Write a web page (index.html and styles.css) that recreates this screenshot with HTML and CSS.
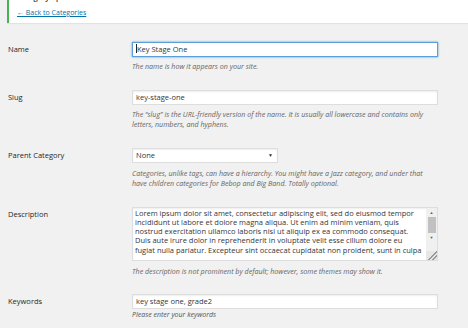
FILE: index.html
```html
<!DOCTYPE html>
<html lang="en">

<head>
    <meta charset="UTF-8">
    <title>Edit Category</title>
    <link rel="stylesheet" href="styles.css">
</head>

<body>
    <div class="notice">
        <p class="notice-title">Category updated.</p>
        <p class="notice-link"><a href="#">&larr; Back to Categories</a></p>
    </div>

    <div class="form-table">
        <div class="row row-name">
            <div class="row-label">Name</div>
            <div class="row-field">
                <div class="input focused"><span class="caret"></span>Key Stage One</div>
                <p class="description">The name is how it appears on your site.</p>
            </div>
        </div>

        <div class="row row-slug">
            <div class="row-label">Slug</div>
            <div class="row-field">
                <div class="input">key-stage-one</div>
                <p class="description">The &ldquo;slug&rdquo; is the URL-friendly version of the name. It is usually all lowercase and contains only<br>letters, numbers, and hyphens.</p>
            </div>
        </div>

        <div class="row row-parent">
            <div class="row-label">Parent Category</div>
            <div class="row-field">
                <div class="select">None<span class="select-arrow">&#9660;</span></div>
                <p class="description">Categories, unlike tags, can have a hierarchy. You might have a Jazz category, and under that<br>have children categories for Bebop and Big Band. Totally optional.</p>
            </div>
        </div>

        <div class="row row-desc">
            <div class="row-label">Description</div>
            <div class="row-field">
                <div class="textarea">
                    <div class="textarea-text">Lorem ipsum dolor sit amet, consectetur adipiscing elit, sed do eiusmod tempor<br>incididunt ut labore et dolore magna aliqua. Ut enim ad minim veniam, quis<br>nostrud exercitation ullamco laboris nisi ut aliquip ex ea commodo consequat.<br>Duis aute irure dolor in reprehenderit in voluptate velit esse cillum dolore eu<br>fugiat nulla pariatur. Excepteur sint occaecat cupidatat non proident, sunt in culpa</div>
                    <div class="scrollbar">
                        <span class="scroll-up">&#9650;</span>
                        <span class="scroll-thumb"></span>
                        <span class="scroll-down">&#9660;</span>
                        <span class="grip"></span>
                    </div>
                </div>
                <p class="description">The description is not prominent by default; however, some themes may show it.</p>
            </div>
        </div>

        <div class="row row-keywords">
            <div class="row-label">Keywords</div>
            <div class="row-field">
                <div class="input">key stage one, grade2</div>
                <p class="hint">Please enter your keywords</p>
            </div>
        </div>
    </div>
</body>

</html>
```

FILE: styles.css
```css
body {
    margin: 0;
    background: #f1f1f1;
    font-family: 'Open Sans', 'Noto Sans', sans-serif;
    color: #23282d;
    overflow: hidden;
}

p {
    margin: 0;
}

.notice {
    margin-left: 7px;
    height: 23px;
    background: #fff;
    border-left: 2px solid #46b450;
    box-shadow: 0 1px 1px rgba(0, 0, 0, 0.06);
    padding-left: 8px;
    overflow: hidden;
}

.notice-title {
    font-size: 7.5px;
    line-height: 10px;
    margin-top: -8px;
    font-weight: 600;
}

.notice-link {
    font-size: 7px;
    line-height: 10px;
    margin-top: 6px;
}

.notice-link a {
    color: #0073aa;
}

.form-table {
    padding-left: 8px;
    margin-top: 19px;
}

.row {
    display: flex;
    align-items: flex-start;
    margin-bottom: 18px;
}

.row-label {
    width: 124px;
    flex: none;
    padding-top: 2px;
    font-size: 7.5px;
    line-height: 11px;
}

.row-field {
    width: 330px;
}

.input,
.select {
    box-sizing: border-box;
    height: 15px;
    width: 306px;
    background: #fff;
    border: 1px solid #ddd;
    box-shadow: inset 0 1px 2px rgba(0, 0, 0, 0.07);
    padding: 0 3px;
    font-size: 7.5px;
    line-height: 13px;
    color: #32373c;
    white-space: nowrap;
}

.focused {
    border-color: #5b9dd9;
    box-shadow: 0 0 2px rgba(30, 140, 190, 0.8);
}

.caret {
    display: inline-block;
    width: 1px;
    height: 9px;
    background: #222;
    vertical-align: -1px;
}

.select {
    width: 146px;
    display: flex;
    justify-content: space-between;
}

.select-arrow {
    font-size: 5px;
    color: #333;
    padding-right: 1px;
}

.description {
    margin-top: 4px;
    font-size: 7.1px;
    line-height: 10.5px;
    font-style: italic;
    color: #666;
    white-space: nowrap;
}

.row-parent .description,
.row-desc .description {
    margin-top: 5px;
}

.hint {
    margin-top: 1px;
    font-size: 7px;
    line-height: 9px;
    font-style: italic;
    color: #555;
}

.textarea {
    box-sizing: border-box;
    width: 306px;
    height: 54px;
    display: flex;
    background: #fff;
    border: 1px solid #ddd;
    box-shadow: inset 0 1px 2px rgba(0, 0, 0, 0.07);
    overflow: hidden;
}

.textarea-text {
    flex: 1;
    padding: 1px 2px;
    font-size: 7.5px;
    line-height: 9.3px;
    color: #32373c;
    white-space: nowrap;
    overflow: hidden;
}

.scrollbar {
    width: 11px;
    flex: none;
    background: #f0f0f0;
    display: flex;
    flex-direction: column;
    align-items: center;
}

.scroll-up,
.scroll-down {
    font-size: 4px;
    line-height: 9px;
    color: #606060;
}

.scroll-thumb {
    width: 8px;
    height: 16px;
    background: #c1c1c1;
}

.grip {
    margin-top: auto;
    width: 11px;
    height: 9px;
    background: linear-gradient(135deg, transparent 55%, #999 55%, #999 62%, transparent 62%, transparent 75%, #999 75%, #999 82%, transparent 82%) #e6e6e6;
}
```
